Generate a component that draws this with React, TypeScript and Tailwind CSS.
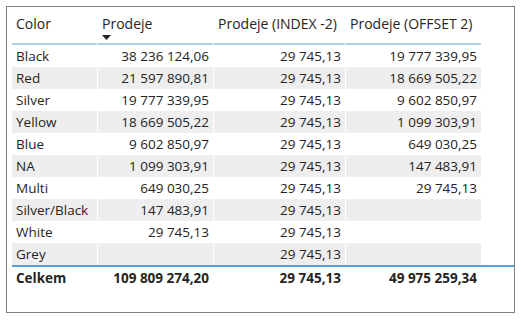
import React from "react";

const rows: [string, string, string, string][] = [
  ["Black", "38 236 124,06", "29 745,13", "19 777 339,95"],
  ["Red", "21 597 890,81", "29 745,13", "18 669 505,22"],
  ["Silver", "19 777 339,95", "29 745,13", "9 602 850,97"],
  ["Yellow", "18 669 505,22", "29 745,13", "1 099 303,91"],
  ["Blue", "9 602 850,97", "29 745,13", "649 030,25"],
  ["NA", "1 099 303,91", "29 745,13", "147 483,91"],
  ["Multi", "649 030,25", "29 745,13", "29 745,13"],
  ["Silver/Black", "147 483,91", "29 745,13", ""],
  ["White", "29 745,13", "29 745,13", ""],
  ["Grey", "", "29 745,13", ""],
];

const cols = "grid grid-cols-[85px_115px_131px_135px] gap-x-px";

export default function App() {
  return (
    <div
      className="h-[322px] w-[521px] bg-white pl-[6px] pt-[6px] text-[#252423]"
      style={{ fontFamily: '"Open Sans", "Noto Sans", sans-serif' }}
    >
      <div className="h-[307px] w-[509px] border border-[#7f7f7f] pl-[5px] pt-[4px]">
        <div className={`${cols} h-[34px] text-[14px]`}>
          {["Color", "Prodeje", "Prodeje (INDEX -2)", "Prodeje (OFFSET 2)"].map((h, i) => (
            <div key={h} className="relative border-b-2 border-[#a9d1f3] pl-[4px] pt-[3px] leading-[19px] whitespace-nowrap">
              {h}
              {i === 1 && (
                <svg className="absolute left-[4px] top-[24px]" width="9" height="5" viewBox="0 0 9 5">
                  <path d="M0 0H9L4.5 5Z" fill="#252423" />
                </svg>
              )}
            </div>
          ))}
        </div>
        {rows.map((r, ri) => (
          <div key={r[0]} className={`${cols} h-[22px] text-[13.5px] leading-[22px]`}>
            {r.map((c, ci) => (
              <div
                key={ci}
                className={`${ri % 2 === 1 ? "bg-[#eeeeee]" : "bg-white"} ${
                  ci === 0 ? "pl-[4px] text-left" : "pr-[4px] text-right"
                } whitespace-nowrap`}
              >
                {c}
              </div>
            ))}
          </div>
        ))}
        <div className={`${cols} h-[24px] border-t-2 border-[#5c9fe0] text-[13.5px] font-bold leading-[22px]`}>
          <div className="pl-[4px]">Celkem</div>
          <div className="pr-[4px] text-right">109 809 274,20</div>
          <div className="pr-[4px] text-right">29 745,13</div>
          <div className="pr-[4px] text-right">49 975 259,34</div>
        </div>
      </div>
    </div>
  );
}
